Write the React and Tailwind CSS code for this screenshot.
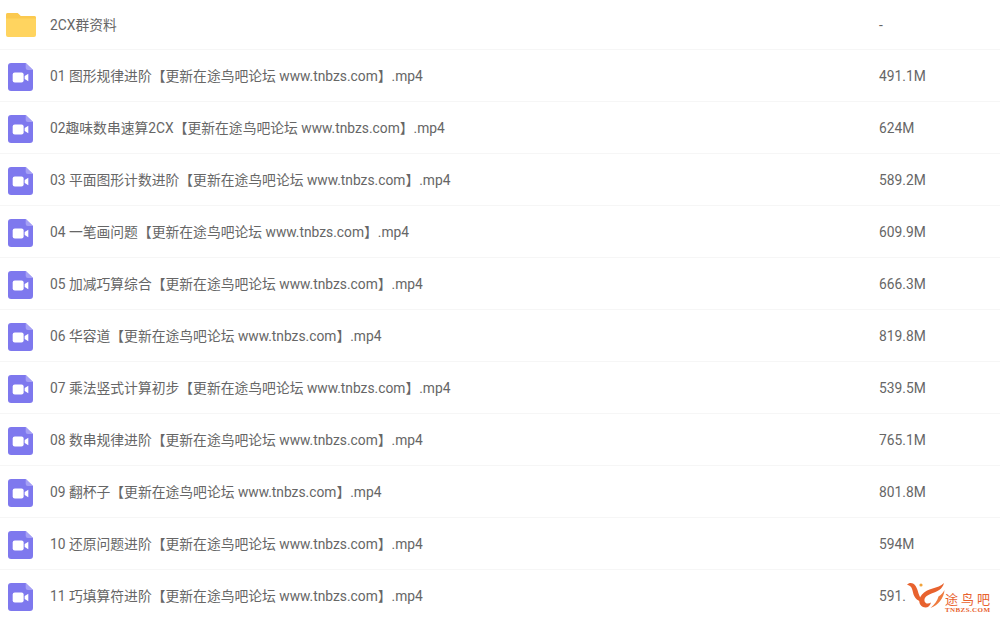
import React from 'react';

const files = [
    ['01 图形规律进阶', '491.1M'],
    ['02趣味数串速算2CX', '624M'],
    ['03 平面图形计数进阶', '589.2M'],
    ['04 一笔画问题', '609.9M'],
    ['05 加减巧算综合', '666.3M'],
    ['06 华容道', '819.8M'],
    ['07 乘法竖式计算初步', '539.5M'],
    ['08 数串规律进阶', '765.1M'],
    ['09 翻杯子', '801.8M'],
    ['10 还原问题进阶', '594M'],
    ['11 巧填算符进阶', '591.'],
];

const FolderIcon = () => (
    <svg width="30" height="24" viewBox="0 0 30 24" className="shrink-0">
        <path d="M2 0h8.500c1 0 1.600.4 2.200 1.100L14.600 3H28a2 2 0 0 1 2 2v17a2 2 0 0 1-2 2H2a2 2 0 0 1-2-2V2a2 2 0 0 1 2-2z" fill="#ffd45f" />
        <path d="M0 5.500h30V5a2 2 0 0 0-2-2H14.600l-2-2C12 .4 11.500 0 10.500 0H2a2 2 0 0 0-2 2z" fill="#fbc94f" />
    </svg>
);

const VideoIcon = () => (
    <svg width="25" height="28" viewBox="0 0 24 28" preserveAspectRatio="none" className="shrink-0 mt-[2px]">
        <path d="M3 0h14l7 7v18a3 3 0 0 1-3 3H3a3 3 0 0 1-3-3V3a3 3 0 0 1 3-3z" fill="#7e78ee" />
        <path d="M17 0l7 7h-5a2 2 0 0 1-2-2z" fill="#a5a0f5" />
        <rect x="4.500" y="9.500" width="10.500" height="10" rx="2" fill="#fff" />
        <path d="M16 13l3.500-2.300v7.600L16 16z" fill="#fff" />
    </svg>
);

const Row = ({ icon, name, size, first }) => (
    <div className={`flex items-center border-b border-[#f6f6f6] ${first ? 'h-[50px]' : 'h-[52px]'}`}>
        <div className="w-[50px] shrink-0 pl-[8px]">{icon}</div>
        <div className="flex-1 min-w-0 truncate pt-[1px]">{name}</div>
        <div className="w-[121px] shrink-0 pt-[1px]">{size}</div>
    </div>
);

const Watermark = () => (
    <div className="absolute left-[907px] top-[582px] w-[88px] h-[32px] flex items-start">
        <svg width="38" height="28" viewBox="0 0 38 28" className="shrink-0">
            {/* head and neck */}
            <path d="M0 2.500c1.500-1.500 4-2 6-1 2 1.200 3.500 3.500 4.500 6.500 1.200 4 2.500 9 7 12.500-6-.5-10.500-4.500-11.500-10-.5-2.500-1-5-3-6.500L0 2.500z" fill="#e8622e" />
            {/* sweeping wing */}
            <path d="M37 1c-1.500 6.500-7 8.500-12.500 10.500-4.500 1.700-7.500 4-7 7.500.4 2.500 3.500 3.500 6.500 1.500-.8 4-4.500 6-8 4.500-4.500-2-5-8-1-12.500C20 6 31 7 37 1z" fill="#e8622e" />
            <path d="M37.500 8c-.5 8-6.500 15.500-14 18 4-3.500 7-7.500 8-11.500 2.500-1.500 4.500-3.500 6-6.500z" fill="#ef7b3e" />
            <circle cx="14" cy="3" r="1.600" fill="#f2a33a" />
        </svg>
        <div className="flex flex-col items-start pt-[10px] leading-none text-[#e8622e]">
            <span className="text-[13px] h-[14px] leading-[14px] font-['Noto_Sans_CJK_SC'] tracking-[3px] whitespace-nowrap">途鸟吧</span>
            <span className="text-[7px] font-['Liberation_Serif'] font-bold tracking-[0.4px] mt-[1px] whitespace-nowrap">TNBZS.COM</span>
        </div>
    </div>
);

const App = () => {
    return (
        <div className="relative w-[1000px] h-[617px] overflow-hidden bg-white text-[13.800px] text-[#666666] font-['Roboto','Noto_Sans_CJK_SC',sans-serif]">
            <Row first icon={<div className="-ml-[2px]"><FolderIcon /></div>} name="2CX群资料" size="-" />
            {files.map(([title, size]) => (
                <Row
                    key={title}
                    icon={<VideoIcon />}
                    name={`${title}【更新在途鸟吧论坛 www.tnbzs.com】.mp4`}
                    size={size}
                />
            ))}
            <Watermark />
        </div>
    );
};

export default App;
